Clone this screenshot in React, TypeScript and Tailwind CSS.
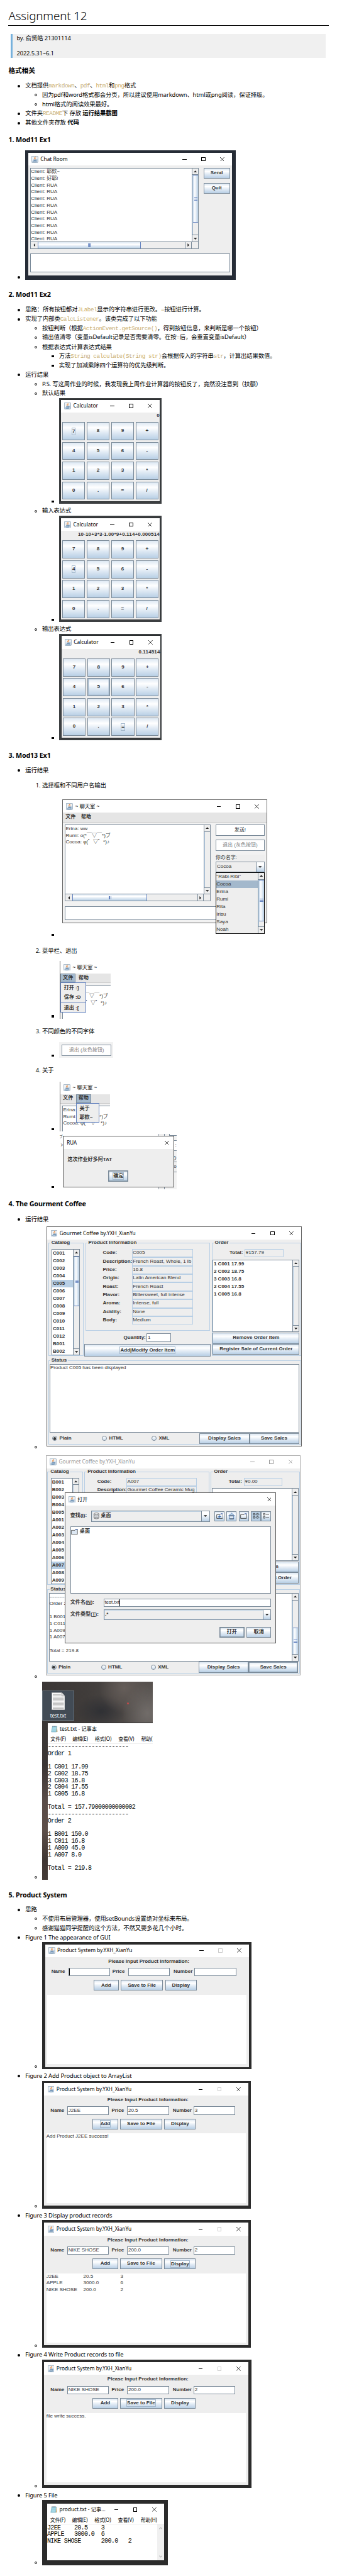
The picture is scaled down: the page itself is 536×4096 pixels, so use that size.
import React from "react";

type Kids = { children?: React.ReactNode };

/* ---------- document primitives ---------- */

type Mark = "disc" | "circle" | "square" | string;

function Marker({ kind }: { kind: Mark }) {
  if (kind === "disc") return <span className="h-[6px] w-[6px] rounded-full bg-black" />;
  if (kind === "circle") return <span className="h-[6px] w-[6px] rounded-full border border-[#222]" />;
  if (kind === "square") return <span className="h-[5px] w-[5px] bg-black" />;
  return <span className="w-full text-right">{kind}</span>;
}

const indent: Record<number, string> = {
  1: "pl-[15px]",
  2: "pl-[55px]",
  3: "pl-[95px]",
};

function Row({ level = 1, mark, className = "", children }: Kids & { level?: number; mark: Mark; className?: string }) {
  return (
    <li className={"flex h-[22px] items-center whitespace-nowrap " + indent[level] + " " + className}>
      <span className="mr-[4px] flex w-[21px] shrink-0 justify-center">
        <Marker kind={mark} />
      </span>
      <span>{children}</span>
    </li>
  );
}

function Shot({ level = 1, mark, className = "", children }: Kids & { level?: number; mark: Mark; className?: string }) {
  return (
    <li className={"flex items-end " + indent[level] + " " + className}>
      <span className="mr-[4px] flex h-[11px] w-[21px] shrink-0 items-center justify-center">
        <Marker kind={mark} />
      </span>
      {children}
    </li>
  );
}

function H({ className = "", children }: Kids & { className?: string }) {
  return <h3 className={"h-[24px] text-[16px] leading-[24px] font-bold " + className}>{children}</h3>;
}

function Code({ children }: Kids) {
  return (
    <code className="font-['Liberation_Mono',monospace] text-[14px] tracking-[-0.7px] whitespace-pre text-[#c9ae6f]">
      {children}
    </code>
  );
}

/* ---------- window chrome ---------- */

function JavaIcon() {
  return (
    <svg viewBox="0 0 16 16" className="h-[16px] w-[16px] shrink-0">
      <rect x="0.5" y="0.5" width="15" height="15" rx="1.2" fill="#eef2f6" stroke="#6f8ba4" />
      <path d="M1 11.5 L15 7 V15 H1 Z" fill="#c3d3e2" />
      <path d="M9.6 1.8 C10.2 4 6.2 4.8 7.8 8.2 C5.6 5.8 6.6 4.2 9.6 1.8 Z" fill="#e8761c" stroke="#e8761c" strokeWidth="0.5" />
      <path d="M10.8 4.6 C9 5.4 8.6 6.4 9.3 8.2" fill="none" stroke="#e8761c" strokeWidth="0.9" />
      <path d="M4.6 9.2 H10.8 M5.2 11 H10.2 M10.8 9.2 C12.8 8.8 12.6 10.8 10.4 11.2 M3.4 13.2 C6 14.2 10 14.2 12.4 13" fill="none" stroke="#3f6f9c" strokeWidth="1.1" />
    </svg>
  );
}

function NoteIcon() {
  return (
    <svg viewBox="0 0 16 16" className="h-[16px] w-[16px] shrink-0">
      <path d="M3.5 1.5 H14.5 L13 15 H1 Z" fill="#8fcbdc" stroke="#6a9cab" strokeWidth="0.7" />
      <path d="M14.5 1.5 L15.6 14.8 L13 15 Z" fill="#c4a46a" />
      <path d="M4 4.5 H13 M3.7 7 H12.8 M3.4 9.5 H12.6 M3 12 H12" stroke="#c8ebf3" strokeWidth="0.9" />
      <path d="M4 0.4 V2.6 M6 0.4 V2.6 M8 0.4 V2.6 M10 0.4 V2.6 M12 0.4 V2.6" stroke="#556" strokeWidth="0.8" />
    </svg>
  );
}

function CloseX() {
  return (
    <svg viewBox="0 0 10 10" className="h-[10px] w-[10px] shrink-0">
      <path d="M0 0 L10 10 M10 0 L0 10" stroke="currentColor" strokeWidth="1.2" />
    </svg>
  );
}

function Controls({ maxOff = false }: { maxOff?: boolean }) {
  return (
    <span className="ml-auto flex items-center gap-[35px] pr-[18px]">
      <span className="h-[1.5px] w-[10px] bg-current" />
      <span className={"h-[10px] w-[10px] border " + (maxOff ? "border-[#ccc]" : "border-current")} />
      <CloseX />
    </span>
  );
}

function TitleBar({
  title,
  icon = <JavaIcon />,
  controls = true,
  maxOff = false,
  className = "h-[30px]",
}: {
  title: string;
  icon?: React.ReactNode;
  controls?: boolean;
  maxOff?: boolean;
  className?: string;
}) {
  return (
    <div className={"flex shrink-0 items-center bg-white pl-[8px] font-['Noto_Sans','Noto_Sans_CJK_SC',sans-serif] text-[12.5px] whitespace-nowrap " + className}>
      {icon}
      <span className="ml-[5px] tracking-[-0.05px]">{title}</span>
      {controls && <Controls maxOff={maxOff} />}
    </div>
  );
}

/* ---------- Swing widgets ---------- */

function Btn({ className = "", focus = false, strong = false, children }: Kids & { className?: string; focus?: boolean; strong?: boolean }) {
  return (
    <span
      className={
        "flex items-center justify-center border border-[#7a8a99] bg-[linear-gradient(to_bottom,#dde8f3_0%,#ffffff_30%,#dde8f3_62%,#b8cfe5_100%)] font-bold whitespace-nowrap text-[#333] " +
        (strong ? "ring-1 ring-inset ring-[#7a8a99] " : "") +
        className
      }
    >
      {focus ? <span className="border border-[#a3b8cc] leading-[15px]">{children}</span> : children}
    </span>
  );
}

function Arrow({ dir }: { dir: "up" | "down" | "left" | "right" }) {
  const d = {
    up: "M0 6 L4 2 L8 6 Z",
    down: "M0 2 L4 6 L8 2 Z",
    left: "M6 0 L2 4 L6 8 Z",
    right: "M2 0 L6 4 L2 8 Z",
  }[dir];
  return (
    <svg viewBox="0 0 8 8" className="h-[8px] w-[8px]">
      <path d={d} fill="#222" />
    </svg>
  );
}

function VBar({ thumb }: { thumb?: string }) {
  return (
    <div className="flex w-[15px] shrink-0 flex-col border-l border-[#7a8a99] bg-[#eee]">
      <span className="flex h-[16px] shrink-0 items-center justify-center border-b border-[#7a8a99]">
        <Arrow dir="up" />
      </span>
      <div className="min-h-0 flex-1 border-l border-[#b8cfe5]">
        {thumb && (
          <div className={"flex flex-col items-center justify-center gap-[1.5px] border-y border-[#6382bf] bg-[linear-gradient(to_right,#c8daee_0%,#ffffff_35%,#dde8f3_65%,#b8cfe5_100%)] " + thumb}>
            <span className="h-[1.5px] w-[8px] bg-[#6382bf]" />
            <span className="h-[1.5px] w-[8px] bg-[#6382bf]" />
            <span className="h-[1.5px] w-[8px] bg-[#6382bf]" />
          </div>
        )}
      </div>
      <span className="flex h-[16px] shrink-0 items-center justify-center border-t border-[#7a8a99]">
        <Arrow dir="down" />
      </span>
    </div>
  );
}

function HBar({ thumb }: { thumb: string }) {
  return (
    <div className="flex h-[16px] shrink-0 border-t border-[#7a8a99] bg-[#eee]">
      <span className="flex w-[16px] shrink-0 items-center justify-center">
        <Arrow dir="left" />
      </span>
      <div className="min-w-0 flex-1">
        <div className={"flex h-full items-center justify-center gap-[1.5px] border-x border-[#6382bf] bg-[linear-gradient(to_bottom,#dde8f3_0%,#ffffff_35%,#dde8f3_65%,#b8cfe5_100%)] " + thumb}>
          <span className="h-[8px] w-[1px] bg-[#6382bf]" />
          <span className="h-[8px] w-[1px] bg-[#6382bf]" />
          <span className="h-[8px] w-[1px] bg-[#6382bf]" />
        </div>
      </div>
      <span className="flex w-[16px] shrink-0 items-center justify-center border-x border-[#7a8a99]">
        <Arrow dir="right" />
      </span>
      <span className="w-[15px] shrink-0" />
    </div>
  );
}

const swing = "font-['Liberation_Sans','Noto_Sans_CJK_SC',sans-serif] text-[12px] leading-[16px] tracking-[0px] text-[#333] ";

/* ---------- 1. chat room ---------- */

function ChatRoom() {
  const lines = ["耶欸~", "好耶!", "RUA", "RUA", "RUA", "RUA", "RUA", "RUA", "RUA", "RUA", "RUA"];
  return (
    <div className={swing + "h-[307px] w-[499px] bg-[#262c36] pt-[6px] pl-[7px]"}>
      <div className="flex h-[291px] w-[484px] flex-col bg-[#eee] text-black">
        <TitleBar title="Chat Room" />
        <div className="mt-[5px] flex pl-[5px] text-[#333]">
          <div className="flex h-[193px] w-[400px] flex-col border border-[#7a8a99] bg-white">
            <div className="flex min-h-0 flex-1">
              <div className="flex-1 pt-px">
                {lines.map((t, i) => (
                  <div key={i} className="h-[16px]">
                    Client: {t}
                  </div>
                ))}
              </div>
              <VBar thumb="h-[113px]" />
            </div>
            <HBar thumb="w-[245px]" />
          </div>
          <div className="ml-[11px] flex w-[63px] flex-col gap-[10px]">
            <Btn className="h-[26px]">Send</Btn>
            <Btn className="h-[26px]">Quit</Btn>
          </div>
        </div>
        <div className="mt-[11px] ml-[5px] h-[45px] w-[474px] border border-[#7a8a99] bg-white" />
      </div>
    </div>
  );
}

/* ---------- 2. calculator ---------- */

const keys = ["7", "8", "9", "+", "4", "5", "6", "-", "1", "2", "3", "*", "0", ".", "=", "/"];

function Calculator({ value, focus, hot, className }: { value: string; focus: string; hot?: string; className: string }) {
  return (
    <div className={swing + "bg-[#3c3f41] " + className}>
      <div className="flex h-[241px] w-[234px] flex-col bg-[#eee] text-black ring-1 ring-[#26282a]">
        <TitleBar title="Calculator" />
        <div className="h-[23px] pt-px text-right text-[12px] font-bold tracking-[0.2px] text-[#333]">{value}</div>
        <div className="grid grid-cols-[repeat(4,54px)] grid-rows-[repeat(4,43px)] gap-[4px] pl-[3px]">
          {keys.map((k) => (
            <Btn key={k} focus={k === focus} className={k === hot ? "ring-2 ring-[#a3b8cc] ring-inset" : ""}>
              {k}
            </Btn>
          ))}
        </div>
      </div>
    </div>
  );
}

/* ---------- 3. chat with menus ---------- */

const names = ['"Rabi-Ribi"', "Cocoa", "Erina", "Rumi", "Rita", "Irisu", "Saya", "Noah"];

function WhiteBtn({ dim = false, children }: Kids & { dim?: boolean }) {
  return (
    <span className={"flex h-[26px] w-[117px] items-center justify-center border border-[#7a8a99] bg-white " + (dim ? "text-[#808080]" : "text-[#333]")}>
      {children}
    </span>
  );
}

function ChatMenuWindow() {
  return (
    <div className={swing + "h-[335px] pt-[8px] pl-[8px]"}>
      <div className="flex h-[293px] w-[486px] flex-col border border-[#666] bg-[#f2f2f2] text-black">
        <TitleBar title="~ 聊天室 ~" />
        <div className="flex h-[23px] items-center gap-[13px] border-b border-[#ccc] bg-[#e5e5e5] pl-[6px] font-bold text-[#333]">
          <span>文件</span>
          <span>帮助</span>
        </div>
        <div className="mt-[5px] flex pl-[5px] text-[#333]">
          <div className="flex h-[182px] w-[346px] flex-col border border-[#7a8a99] bg-white">
            <div className="flex min-h-0 flex-1">
              <div className="flex-1 pt-px">
                <div>Erina: ww</div>
                <div>Rumi: o(*￣▽￣*)ブ</div>
                <div>Cocoa: φ(゜▽゜*)♪</div>
              </div>
              <VBar />
            </div>
            <HBar thumb="w-[178px]" />
          </div>
          <div className="relative ml-[11px] flex w-[117px] flex-col">
            <WhiteBtn>发送!</WhiteBtn>
            <span className="h-[10px]" />
            <WhiteBtn dim>退出 (灰色按钮)</WhiteBtn>
            <span className="mt-[10px] h-[16px] bg-[#eee]">你の名字:</span>
            <div className="flex h-[25px] border border-[#7a8a99] bg-[#eee]">
              <span className="flex-1 pt-[3px] pl-[2px]">Cocoa</span>
              <span className="flex w-[19px] items-center justify-center border-l border-[#7a8a99] bg-[linear-gradient(to_bottom,#fff_30%,#b8cfe5)]">
                <Arrow dir="down" />
              </span>
            </div>
            <div className="absolute top-[113px] left-0 flex h-[146px] w-[117px] border border-black bg-[#eee]">
              <div className="flex-1">
                {names.map((n) => (
                  <div key={n} className={"h-[18px] pl-px leading-[18px] " + (n === "Cocoa" ? "bg-[#a3b8cc]" : "")}>
                    {n}
                  </div>
                ))}
              </div>
              <VBar thumb="h-[99px]" />
            </div>
          </div>
        </div>
        <div className="mt-[11px] ml-[5px] h-[33px] w-[474px] border border-[#7a8a99] bg-white" />
      </div>
    </div>
  );
}

function MenuCrop({ open, className, children }: Kids & { open: "file" | "help"; className: string }) {
  const on = "border border-[#7a8a99] bg-[#a3b8cc]";
  return (
    <div className={swing + "relative ml-[2px] flex flex-col overflow-hidden border-l border-[#666] " + className}>
      <div className="text-black">
        <TitleBar title="~ 聊天室 ~" controls={false} className="h-[30px]" />
      </div>
      <div className="flex h-[23px] shrink-0 border-b border-[#ccc] bg-[#e5e5e5] font-bold">
        <span className={"flex h-[21px] w-[36px] items-center justify-center " + (open === "file" ? on : "")}>文件</span>
        <span className={"ml-[1px] flex h-[21px] w-[36px] items-center justify-center " + (open === "help" ? on : "")}>帮助</span>
      </div>
      <div className="flex flex-1 bg-[#f2f2f2] pt-[5px] pl-[5px]">
        <div className="flex-1 border-t border-l border-[#7a8a99] bg-white pt-px whitespace-nowrap">
          <div>Erina: ww</div>
          <div>Rumi: o(*￣▽￣*)ブ</div>
          <div>Cocoa: φ(゜▽゜*)♪</div>
        </div>
      </div>
      {children}
    </div>
  );
}

function RuaDialog() {
  return (
    <div className={swing + "relative flex h-[131px] w-[279px] overflow-hidden"}>
      <div className="flex w-[9px] flex-col items-end text-[8px]">
        <div className="h-[18px] leading-[14px]">ブ</div>
        <div className="h-[16px] tracking-[-1px]">)♪</div>
      </div>
      <div className="ml-auto flex w-[45px] border-l border-[#7a8a99] bg-[#f2f2f2]">
        <span className="w-[15px] border-r border-[#7a8a99] bg-[#eee]" />
        <div className="ml-auto flex w-[17px] flex-col">
          <span className="h-[4px] border-b border-l border-[#7a8a99] bg-white" />
          <span className="h-[10px]" />
          <span className="flex h-[26px] items-center justify-end border-y border-[#7a8a99] bg-white">:</span>
          <span className="mt-[10px] h-[16px] overflow-hidden text-right">の</span>
          <span className="flex h-[25px] items-center justify-end border-y border-[#7a8a99] bg-[#eee]">o</span>
        </div>
      </div>
      <div className="absolute top-[4px] left-[9px] flex h-[122px] w-[264px] flex-col border border-[#555] bg-[#eee]">
        <div className="flex h-[30px] items-center justify-between bg-white pr-[10px] pl-[8px] font-['Noto_Sans',sans-serif] text-black">
          RUA <CloseX />
        </div>
        <div className="mt-[18px] pl-[10px] font-bold">这次作业好多阿TAT</div>
        <div className="mt-[17px] flex justify-center">
          <Btn focus strong className="h-[26px] w-[47px]">
            确定
          </Btn>
        </div>
      </div>
    </div>
  );
}

/* ---------- 4. gourmet coffee ---------- */

function Group({ title, className, children }: Kids & { title: string; className: string }) {
  return (
    <fieldset className={"min-w-0 shrink-0 border border-[#b8cfe5] " + className}>
      <legend className="ml-[4px] h-[16px] px-[2px] font-bold">{title}</legend>
      {children}
    </fieldset>
  );
}

function Radio({ label, on = false }: { label: string; on?: boolean }) {
  return (
    <span className="flex w-[118px] items-center pl-[4px] font-bold">
      <span className="mr-[5px] flex h-[12px] w-[12px] items-center justify-center rounded-full border border-[#7a8a99] bg-[linear-gradient(to_bottom,#fff,#cfdfee)]">
        {on && <span className="h-[7px] w-[7px] rounded-full bg-[#333]" />}
      </span>
      {label}
    </span>
  );
}

type CoffeeProps = Kids & {
  faded?: boolean;
  codes: string[];
  selected: string;
  listThumb?: string;
  fields: [string, string][];
  labelPad: string;
  fieldWidth: string;
  total: string;
  items: string[];
  status: React.ReactNode;
  statusThumb?: string;
};

function CoffeeWindow(p: CoffeeProps) {
  return (
    <div
      className={
        swing + "relative flex h-[522px] w-[605px] flex-col border bg-[#eee] " + (p.faded ? "border-[#aaa]" : "border-[#666]")
      }
    >
      <div className={p.faded ? "text-[#999]" : "text-black"}>
        <TitleBar title="Gourmet Coffee by.YXH_XianYu" />
      </div>
      <div className="flex h-[279px] pl-[2px]">
        <Group title="Catalog" className="h-[276px] w-[84px]">
          <div className="mt-[6px] ml-[7px] flex h-[253px] w-[67px] border border-[#7a8a99] bg-white">
            <div className="min-w-0 flex-1 overflow-hidden font-bold">
              {p.codes.map((c) => (
                <div key={c} className={"h-[18px] pl-[1px] leading-[18px] " + (c === p.selected ? "bg-[#b8cfe5]" : "")}>
                  {c}
                </div>
              ))}
            </div>
            <VBar thumb={p.listThumb} />
          </div>
        </Group>
        <div className="ml-[2px] flex w-[300px] flex-col">
          <Group title="Product Information" className="ml-[2px] h-[216px] w-[296px]">
            <div className={"mt-[6px] flex flex-col " + p.labelPad}>
              {p.fields.map(([k, v]) => (
                <div key={k} className="flex h-[20px] items-center">
                  <span className="w-[69px] font-bold">{k}:</span>
                  <span className={"flex h-[20px] items-center overflow-hidden border border-[#b8cfe5] pl-px whitespace-nowrap " + p.fieldWidth}>{v}</span>
                </div>
              ))}
            </div>
          </Group>
          <div className="mt-[7px] flex h-[20px] items-center pl-[93px]">
            <span className="w-[55px] font-bold">Quantity:</span>
            <span className="flex h-[20px] w-[58px] items-center border border-[#7a8a99] bg-white pl-px">1</span>
          </div>
          <Btn focus className="mt-[5px] h-[30px] w-[300px]">
            Add|Modify Order Item
          </Btn>
        </div>
        <Group title="Order" className="ml-[2px] h-[276px] w-[212px]">
          <div className="mt-[6px] flex h-[20px] items-center pl-[41px]">
            <span className="w-[36px] font-bold">Total:</span>
            <span className="flex h-[20px] w-[92px] items-center border border-[#b8cfe5] pl-px">{p.total}</span>
          </div>
          <div className="mt-[5px] ml-[1px] flex h-[173px] w-[206px] border border-[#7a8a99] bg-white">
            <div className="flex-1 pl-[1px] font-bold">
              {p.items.map((c) => (
                <div key={c} className="h-[18px] leading-[18px]">
                  {c}
                </div>
              ))}
            </div>
            <VBar />
          </div>
          <div className="mt-[1px] ml-[1px] w-[206px]">
            <Btn className="h-[26px]">Remove Order Item</Btn>
            <Btn className="h-[26px]">Register Sale of Current Order</Btn>
          </div>
        </Group>
      </div>
      <Group title="Status" className="ml-[2px] h-[208px] w-[600px]">
        <div className="mt-px ml-[2px] flex h-[162px] w-[593px] border border-[#7a8a99] bg-white">
          <div className="flex-1 overflow-hidden whitespace-pre">{p.status}</div>
          {p.statusThumb && <VBar thumb={p.statusThumb} />}
        </div>
        <div className="mt-px ml-[4px] flex h-[26px]">
          <Radio label="Plain" on />
          <Radio label="HTML" />
          <Radio label="XML" />
          <Btn className="w-[118px]">Display Sales</Btn>
          <Btn strong={p.faded} className="w-[118px]">
            Save Sales
          </Btn>
        </div>
      </Group>
      {p.children}
    </div>
  );
}

function Combo({ className, children }: Kids & { className: string }) {
  return (
    <span className={"flex border border-[#7a8a99] bg-[#eee] ring-1 ring-inset ring-[#b8cfe5] " + className}>
      <span className="flex flex-1 items-center pl-[2px] font-bold">{children}</span>
      <span className="flex w-[19px] items-center justify-center border-l border-[#7a8a99] bg-[linear-gradient(to_bottom,#fff_30%,#b8cfe5)]">
        <Arrow dir="down" />
      </span>
    </span>
  );
}

function Folder() {
  return (
    <svg viewBox="0 0 16 16" className="h-[16px] w-[16px]">
      <path d="M0.7 5 H9 L11 2.5 H15.3 V14.3 H0.7 Z" fill="#dde8f3" stroke="#333" />
      <path d="M10 4 L11.3 1.6 H15.6 V4 Z" fill="#6382bf" />
    </svg>
  );
}

function ToolIcon({ kind }: { kind: "up" | "home" | "new" | "grid" | "list" }) {
  const s = { fill: "none", stroke: "#333", strokeWidth: 1.2 };
  return (
    <svg viewBox="0 0 16 16" className="h-[16px] w-[16px]">
      {kind === "up" && (
        <>
          <path d="M1 5 H9 L11 3 H15 V14 H1 Z" {...s} />
          <path d="M8 14 V8 M4.5 11 L8 7.5 L11.5 11" fill="none" stroke="#3f6fb0" strokeWidth="1.6" />
          <path d="M11 2 H15.5 V4.5 H10 Z" fill="#6382bf" />
        </>
      )}
      {kind === "home" && (
        <>
          <path d="M3 7.5 V15 H13 V7.5" fill="#dde8f3" stroke="#3f6fb0" strokeWidth="1.2" />
          <path d="M0.8 7.5 L8 1.5 L15.2 7.5 Z" fill="#b8cfe5" stroke="#3f6fb0" />
          <path d="M3 7.8 H13 M3 15 H13" stroke="#222" strokeWidth="1.2" />
        </>
      )}
      {kind === "new" && (
        <>
          <path d="M1 5 H9 L11 3 H15 V14 H1 Z" {...s} />
          <path d="M11 2 H15.5 V4.5 H10 Z" fill="#6382bf" />
        </>
      )}
      {kind === "grid" && (
        <path d="M1.5 2 h3.5 v4 h-3.5 z M9.5 2 h3.5 v4 h-3.5 z M1.5 9.5 h3.5 v4 h-3.5 z M9.5 9.5 h3.5 v4 h-3.5 z M6.5 4.5 h1.2 M14.5 4.5 h1.2 M6.5 12 h1.2 M14.5 12 h1.2" {...s} />
      )}
      {kind === "list" && <path d="M1.5 2 h3.5 v4 h-3.5 z M1.5 9.5 h3.5 v4 h-3.5 z M7 4.5 h8 M7 12 h8" {...s} />}
    </svg>
  );
}

function OpenDialog() {
  return (
    <div className="absolute top-[87px] left-[43px] flex h-[358px] w-[502px] flex-col border border-[#555] bg-[#eee] pb-[12px] text-black">
      <div className="flex h-[30px] shrink-0 items-center bg-white pr-[10px] pl-[8px] font-['Noto_Sans','Noto_Sans_CJK_SC',sans-serif]">
        <JavaIcon />
        <span className="ml-[5px]">打开</span>
        <span className="ml-auto">
          <CloseX />
        </span>
      </div>
      <div className="flex flex-col pl-[12px] text-[#333]">
        <div className="mt-[11px] flex h-[27px] items-center">
          <span className="w-[50px] font-bold">
            查找(<u>I</u>):
          </span>
          <Combo className="h-[27px] w-[281px]">
            <svg viewBox="0 0 16 16" className="mr-[3px] h-[16px] w-[16px]">
              <path d="M2 3 V13 C4 15.5 11 15.5 14 12 V2.5 Z" fill="#dfe3e8" />
              <ellipse cx="8" cy="3.2" rx="6" ry="2.2" fill="#f4f6f8" stroke="#444" />
              <path d="M2 3.5 V6.5 C4 9 12 9 14 6.5 V3.5 M2 7.5 V10 C4 12.5 12 12.5 14 10 V7.5 M2 11 V13 C4 15.5 12 15.5 14 13 V11" fill="none" stroke="#444" />
            </svg>
            桌面
          </Combo>
          <div className="ml-[11px] flex">
            <Btn className="mr-[5px] h-[24px] w-[24px]"><ToolIcon kind="up" /></Btn>
            <Btn className="mr-[5px] h-[24px] w-[24px]"><ToolIcon kind="home" /></Btn>
            <Btn className="mr-[5px] h-[24px] w-[24px]"><ToolIcon kind="new" /></Btn>
            <span className="flex h-[24px] w-[24px] items-center justify-center border border-[#7a8a99] bg-[#b8cfe5]"><ToolIcon kind="grid" /></span>
            <Btn className="h-[24px] w-[24px]"><ToolIcon kind="list" /></Btn>
          </div>
        </div>
        <div className="mt-[11px] flex h-[160px] w-[477px] items-start gap-[4px] border border-[#7a8a99] bg-white pt-[3px] pl-[1px] font-bold">
          <Folder />
          桌面
        </div>
        <div className="mt-[12px] flex h-[19px] items-center">
          <span className="w-[79px] font-bold">
            文件名(<u>N</u>):
          </span>
          <span className="flex h-[20px] w-[398px] items-center border border-[#7a8a99] bg-white pl-px">
            test.txt
            <span className="h-[16px] w-px bg-black" />
          </span>
        </div>
        <div className="mt-[6px] flex h-[25px] items-center">
          <span className="w-[79px] font-bold whitespace-nowrap">
            文件类型(<u>T</u>):
          </span>
          <Combo className="h-[25px] w-[398px]">.*</Combo>
        </div>
        <div className="mt-[17px] flex w-[477px] justify-end gap-[5px]">
          <Btn strong className="h-[26px] w-[59px]">打开</Btn>
          <Btn className="h-[26px] w-[59px]">取消</Btn>
        </div>
      </div>
    </div>
  );
}

/* ---------- notepad ---------- */

const pad = "font-['Liberation_Mono',monospace] text-[15px] leading-[16px] tracking-[-1px] whitespace-pre text-black ";

function NotepadMenu({ cut = false }: { cut?: boolean }) {
  return (
    <div className="flex h-[20px] items-center overflow-hidden border-b-2 border-[#eee] pl-[7px] text-[12px] tracking-[-0.2px] whitespace-nowrap text-black">
      <span className="w-[52px] shrink-0">文件(F)</span>
      <span className="w-[53px] shrink-0">编辑(E)</span>
      <span className="w-[56px] shrink-0">格式(O)</span>
      <span className="w-[54px] shrink-0">查看(V)</span>
      <span className="shrink-0">{cut ? "帮助(" : "帮助(H)"}</span>
    </div>
  );
}

const saleText = `------------------------
Order 1

1 C001 17.99
2 C002 18.75
3 C003 16.8
2 C004 17.55
1 C005 16.8

Total = 157.79000000000002
------------------------
Order 2

1 B001 150.0
1 C011 16.8
1 A009 45.0
1 A007 8.0

Total = 219.8`;

function DesktopShot() {
  return (
    <div className="flex h-[471px] w-[263px] flex-col bg-[linear-gradient(to_bottom,#3a3635_0%,#3b3736_30%,#3a3534_42%,#5a4c47_60%,#5d4f49_75%,#3f3633_90%,#453c38_100%)]">
      <div className="h-[97px] bg-[radial-gradient(ellipse_60px_70px_at_250px_75px,#716c69_0%,transparent_100%),radial-gradient(ellipse_60px_60px_at_195px_15px,#655d59_0%,transparent_100%),radial-gradient(ellipse_60px_40px_at_140px_70px,#2f3034_0%,transparent_100%),linear-gradient(to_right,#3a3635,#403c3a_40%,#57524f)] pt-[21px]">
        <div className="flex">
          <div className="flex h-[72px] w-[76px] flex-col items-center border border-[#66717a] bg-[#424b55] pt-[4px]">
            <svg viewBox="0 0 32 42" className="h-[42px] w-[32px]">
              <path d="M0.5 0.5 H24 L31.5 8.5 V41.5 H0.5 Z" fill="#fafafa" stroke="#999" />
              <path d="M24 0.5 V8.5 H31.5" fill="#ddd" stroke="#888" />
              <path d="M3 5 H22 M3 8 H22 M3 11 H29 M3 14 H29 M3 17 H29 M3 20 H29 M3 23 H29 M3 26 H29 M3 29 H29 M3 32 H29 M3 35 H29 M3 38 H29" stroke="#888" strokeWidth="0.9" />
            </svg>
            <span className="mt-[6px] text-[12px] leading-[16px] text-white">test.txt</span>
          </div>
          <span className="mt-[29px] ml-[126px] h-[4px] w-[4px] rounded-full bg-[#c8484a]" />
        </div>
      </div>
      <div className="ml-[13px] flex flex-1 flex-col overflow-hidden border-t border-[#333] bg-white text-black">
        <TitleBar title="test.txt - 记事本" icon={<NoteIcon />} controls={false} className="h-[30px]" />
        <NotepadMenu cut />
        <div className={pad}>{saleText}</div>
      </div>
    </div>
  );
}

function ProductFile() {
  return (
    <div className="h-[155px] w-[299px] bg-[#2b2b2b] pt-[8px] pl-[12px]">
      <div className="flex h-[135px] w-[277px] flex-col bg-white text-black">
        <TitleBar title="product.txt - 记事..." icon={<NoteIcon />} />
        <NotepadMenu />
        <div className="flex flex-1">
          <div className={pad + "flex-1 pt-px"}>
            {[
              ["J2EE", "w-[64px]", "20.5", "w-[64px]", "3"],
              ["APPLE", "w-[64px]", "3000.0", "w-[64px]", "6"],
              ["NIKE SHOSE", "w-[128px]", "200.0", "w-[64px]", "2"],
            ].map(([a, wa, b, wb, c]) => (
              <div key={a} className="flex h-[16px]">
                <span className={wa}>{a}</span>
                <span className={wb}>{b}</span>
                <span>{c}</span>
              </div>
            ))}
          </div>
          <div className="flex w-[16px] flex-col items-center justify-between bg-[#f0f0f0] py-[6px]">
            <svg viewBox="0 0 8 6" className="h-[6px] w-[8px]">
              <path d="M0.5 5 L4 1.5 L7.5 5" fill="none" stroke="#bbb" strokeWidth="1.8" />
            </svg>
            <svg viewBox="0 0 8 6" className="h-[6px] w-[8px]">
              <path d="M0.5 1 L4 4.5 L7.5 1" fill="none" stroke="#bbb" strokeWidth="1.8" />
            </svg>
          </div>
        </div>
      </div>
    </div>
  );
}

/* ---------- 5. product system ---------- */

function Field({ children }: Kids) {
  return <span className="flex h-[20px] w-[99px] items-center border border-[#7a8a99] bg-white pl-px font-normal whitespace-nowrap">{children}</span>;
}

function ProductWindow({
  className,
  values = ["", "", ""],
  focus,
  children,
}: Kids & { className: string; values?: string[]; focus?: string }) {
  return (
    <div className={swing + "bg-[#2b2b2b] " + className}>
      <div className="flex h-[291px] w-[484px] flex-col bg-[#eee]">
        <div className="text-black">
          <TitleBar title="Product System by.YXH_XianYu" maxOff />
        </div>
        <div className="h-[22px] pl-[150px] leading-[22px] font-bold">Please Input Product Information:</div>
        <div className="mt-[4px] flex h-[20px] items-center pl-[15px] font-bold">
          <span className="w-[40px]">Name</span>
          <Field>{values[0] || <span className="h-[16px] w-px bg-black" />}</Field>
          <span className="w-[43px] pl-[6px]">Price</span>
          <Field>{values[1]}</Field>
          <span className="w-[59px] pl-[9px]">Number</span>
          <Field>{values[2]}</Field>
        </div>
        <div className="mt-[9px] flex gap-[5px] pl-[115px]">
          <Btn focus={focus === "Add"} className="h-[25px] w-[60px]">Add</Btn>
          <Btn focus={focus === "Save"} className="h-[25px] w-[100px]">Save to File</Btn>
          <Btn focus={focus === "Display"} className="h-[25px] w-[75px]">Display</Btn>
        </div>
        <div className="mt-[10px] ml-[5px] h-[165px] w-[473px] bg-white">{children}</div>
      </div>
    </div>
  );
}

/* ---------- page ---------- */

export default function App() {
  return (
    <main className="min-h-[6113px] w-[800px] bg-white px-[20px] pt-[16px] font-['Noto_Sans','Noto_Sans_CJK_SC',sans-serif] text-[14px] leading-[22px] tracking-[-0.2px] text-black [zoom:0.67]">
      <h1 className="h-[45px] border-b border-black text-[28px] leading-[41px] font-light tracking-[-0.2px]">Assignment 12</h1>
      <blockquote className="mt-[19px] mr-[7px] ml-[5px] flex flex-col gap-[14px] border-l-[5px] border-[#76b1dc] bg-[#f0f0f0] pl-[10px]">
        <p>by. 俞贤皓 21301114</p>
        <p>2022.5.31~6.1</p>
      </blockquote>

      <H className="mt-[17px]">格式相关</H>
      <ul className="mt-[14px]">
        <Row mark="disc">
          文档提供<Code>markdown</Code>、<Code>pdf</Code>、<Code>html</Code>和<Code>png</Code>格式
        </Row>
        <Row level={2} mark="circle">因为pdf和word格式都会分页，所以建议使用markdown、html或png阅读，保证排版。</Row>
        <Row level={2} mark="circle">html格式的阅读效果最好。</Row>
        <Row mark="disc">
          文件夹<Code>README</Code>下 存放 <b>运行结果截图</b>
        </Row>
        <Row mark="disc">
          其他文件夹存放 <b>代码</b>
        </Row>
      </ul>

      <H className="mt-[17px]">1. Mod11 Ex1</H>
      <ul className="mt-[13px]">
        <Shot mark="disc">
          <ChatRoom />
        </Shot>
      </ul>

      <H className="mt-[23px]">2. Mod11 Ex2</H>
      <ul className="mt-[14px]">
        <Row mark="disc">
          思路：所有按钮都对<Code>JLabel</Code>显示的字符串进行更改。<Code>=</Code>按钮进行计算。
        </Row>
        <Row mark="disc">
          实现了内部类<Code>CalcListener</Code>。该类完成了以下功能
        </Row>
        <Row level={2} mark="circle">
          按钮判断（根据<Code>ActionEvent.getSource()</Code>，得到按钮信息，来判断是哪一个按钮）
        </Row>
        <Row level={2} mark="circle">
          输出值清零（变量isDefault记录是否需要清零。在按<Code>=</Code>后，会重置变量isDefault）
        </Row>
        <Row level={2} mark="circle">根据表达式计算表达式结果</Row>
        <Row level={3} mark="square">
          方法<Code>String calculate(String str)</Code>会根据传入的字符串<Code>str</Code>，计算出结果数值。
        </Row>
        <Row level={3} mark="square">实现了加减乘除四个运算符的优先级判断。</Row>
        <Row mark="disc">运行结果</Row>
        <Row level={2} mark="circle">P.S. 写这周作业的时候，我发现我上周作业计算器的按钮反了，竟然没注意到（扶额）</Row>
        <Row level={2} mark="circle">默认结果</Row>
        <Shot level={3} mark="square">
          <Calculator value="0" focus="7" className="h-[251px] w-[243px] pt-[4px] pl-[5px]" />
        </Shot>
        <Row level={2} mark="circle" className="mt-[6px]">输入表达式</Row>
        <Shot level={3} mark="square">
          <Calculator value="10-10+3*3-1.00*9+0.114+0.000514" focus="4" className="h-[253px] w-[243px] pt-[6px] pl-[5px]" />
        </Shot>
        <Row level={2} mark="circle" className="mt-[6px]">输出表达式</Row>
        <Shot level={3} mark="square">
          <Calculator value="0.114514" focus="=" hot="5" className="h-[252px] w-[244px] pt-[5px] pl-[6px]" />
        </Shot>
      </ul>

      <H className="mt-[24px]">3. Mod13 Ex1</H>
      <ul className="mt-[13px]">
        <Row mark="disc">运行结果</Row>
        <Row level={2} mark="1." className="mt-[14px]">选择框和不同用户名输出</Row>
        <Shot level={3} mark="square" className="mt-[14px]">
          <ChatMenuWindow />
        </Shot>
        <Row level={2} mark="2." className="mt-[21px]">菜单栏、退出</Row>
        <Shot level={3} mark="square" className="mt-[13px]">
          <MenuCrop open="file" className="h-[137px] w-[121px]">
            <div className="absolute top-[51px] left-0 flex h-[72px] w-[61px] flex-col border border-[#6382bf] bg-[#eee] pl-[7px] font-bold">
              <span className="mt-[5px] h-[21px]">打开 :]</span>
              <span className="h-[19px]">保存 :D</span>
              <span className="ml-[-7px] border-t border-[#6382bf]" />
              <span className="mt-[5px]">退出 :[</span>
            </div>
          </MenuCrop>
        </Shot>
        <Row level={2} mark="3." className="mt-[20px]">不同颜色的不同字体</Row>
        <Shot level={3} mark="square" className="mt-[14px]">
          <div className={swing + "h-[37px] w-[129px] bg-[#f2f2f2] pt-[6px] pl-[7px]"}>
            <WhiteBtn dim>退出 (灰色按钮)</WhiteBtn>
          </div>
        </Shot>
        <Row level={2} mark="4." className="mt-[20px]">关于</Row>
        <Shot level={3} mark="square" className="mt-[14px]">
          <MenuCrop open="help" className="h-[119px] w-[119px]">
            <div className="absolute top-[51px] left-[37px] flex h-[47px] w-[55px] flex-col border border-[#6382bf] bg-[#eee] pl-[7px] font-bold">
              <span className="mt-[5px] h-[21px]">关于</span>
              <span>耶欸~</span>
            </div>
          </MenuCrop>
        </Shot>
        <Shot level={3} mark="square" className="mt-[6px]">
          <RuaDialog />
        </Shot>
      </ul>

      <H className="mt-[23px]">4. The Gourment Coffee</H>
      <ul className="mt-[14px]">
        <Row mark="disc">运行结果</Row>
        <Shot level={2} mark="circle" className="mt-[5px] h-[530px]">
          <div className="mb-[8px] ml-[11px]">
            <CoffeeWindow
              codes={["C001", "C002", "C003", "C004", "C005", "C006", "C007", "C008", "C009", "C010", "C011", "C012", "B001", "B002"]}
              selected="C005"
              listThumb="h-[119px]"
              labelPad="pl-[40px]"
              fieldWidth="w-[146px]"
              fields={[
                ["Code", "C005"],
                ["Description", "French Roast, Whole, 1 lb"],
                ["Price", "16.8"],
                ["Origin", "Latin American Blend"],
                ["Roast", "French Roast"],
                ["Flavor", "Bittersweet, full intense"],
                ["Aroma", "Intense, full"],
                ["Acidity", "None"],
                ["Body", "Medium"],
              ]}
              total="¥157.79"
              items={["1 C001 17.99", "2 C002 18.75", "3 C003 16.8", "2 C004 17.55", "1 C005 16.8"]}
              status="Product C005 has been displayed"
            />
          </div>
        </Shot>
        <Shot level={2} mark="circle" className="mt-[13px] h-[531px]">
          <div className="mb-[9px] ml-[9px]">
            <CoffeeWindow
              faded
              codes={["B001", "B002", "B003", "B004", "B005", "A001", "A002", "A003", "A004", "A005", "A006", "A007", "A008", "A009"]}
              selected="A007"
              labelPad="pl-[29px]"
              fieldWidth="w-[168px]"
              fields={[
                ["Code", "A007"],
                ["Description", "Gourmet Coffee Ceramic Mug"],
              ]}
              total="¥0.00"
              items={[]}
              status={
                <>
                  <div className="w-[38px] overflow-hidden">{"---------\nOrder 2\n\n1 B001\n1 C011\n1 A009\n1 A007"}</div>
                  <div className="pt-[16px]">Total = 219.8</div>
                </>
              }
              statusThumb="mt-[64px] h-[65px]"
            >
              <OpenDialog />
            </CoffeeWindow>
          </div>
        </Shot>
        <Shot level={2} mark="circle" className="mt-[6px]">
          <DesktopShot />
        </Shot>
      </ul>

      <H className="mt-[23px]">5. Product System</H>
      <ul className="mt-[13px]">
        <Row mark="disc">思路</Row>
        <Row level={2} mark="circle">不使用布局管理器，使用setBounds设置绝对坐标来布局。</Row>
        <Row level={2} mark="circle">感谢猫猫同学提醒的这个方法，不然又要多花几个小时。</Row>
        <Row mark="disc">Figure 1 The appearance of GUI</Row>
        <Shot level={2} mark="circle">
          <ProductWindow className="h-[301px] w-[497px] pt-[5px] pl-[7px]" />
        </Shot>
        <Row mark="disc" className="mt-[6px]">Figure 2 Add Product object to ArrayList</Row>
        <Shot level={2} mark="circle">
          <ProductWindow className="h-[303px] w-[495px] pt-[5px] pl-[5px]" values={["J2EE", "20.5", "3"]} focus="Add">
            Add Product J2EE success!
          </ProductWindow>
        </Shot>
        <Row mark="disc" className="mt-[6px]">Figure 3 Display product records</Row>
        <Shot level={2} mark="circle">
          <ProductWindow className="h-[303px] w-[495px] pt-[6px] pl-[5px]" values={["NIKE SHOSE", "200.0", "2"]} focus="Display">
            <div className="grid grid-cols-[88px_88px_88px]">
              <span>J2EE</span>
              <span>20.5</span>
              <span>3</span>
              <span>APPLE</span>
              <span>3000.0</span>
              <span>6</span>
              <span>NIKE SHOSE</span>
              <span>200.0</span>
              <span>2</span>
            </div>
          </ProductWindow>
        </Shot>
        <Row mark="disc" className="mt-[6px]">Figure 4 Write Product records to file</Row>
        <Shot level={2} mark="circle">
          <ProductWindow className="h-[305px] w-[497px] pt-[6px] pl-[5px]" values={["NIKE SHOSE", "200.0", "2"]} focus="Save">
            file write success.
          </ProductWindow>
        </Shot>
        <Row mark="disc" className="mt-[6px]">Figure 5 File</Row>
        <Shot level={2} mark="circle">
          <ProductFile />
        </Shot>
      </ul>
    </main>
  );
}
